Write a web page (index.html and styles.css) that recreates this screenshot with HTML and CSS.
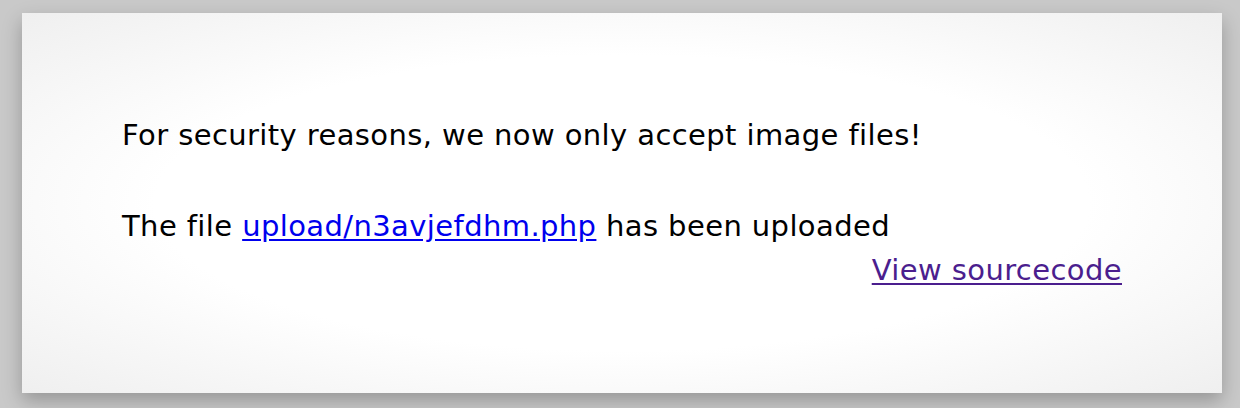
FILE: index.html
```html
<!DOCTYPE html>
<html>
<head>
<meta charset="utf-8">
<link rel="stylesheet" href="styles.css">
</head>
<body>
<div class="card">
  <p class="msg">For security reasons, we now only accept image files!</p>
  <p class="msg result">The file <a class="file" href="#">upload/n3avjefdhm.php</a> has been uploaded</p>
  <div class="source"><a class="src" href="#">View sourcecode</a></div>
</div>
</body>
</html>
```

FILE: styles.css
```css
html, body {
  margin: 0;
  padding: 0;
  background: #c9c9c9;
  width: 1240px;
  height: 408px;
  overflow: hidden;
}
.card {
  box-sizing: border-box;
  margin: 13px 0 0 22px;
  width: 1200px;
  height: 380px;
  padding: 100px 100px 0 100px;
  background: radial-gradient(ellipse at center, #ffffff 55%, #efefef 100%);
  box-shadow: 0 8px 18px rgba(0,0,0,0.25);
  font-family: "DejaVu Sans", sans-serif;
  font-size: 29px;
  letter-spacing: 0.4px;
  color: #000;
}
.msg {
  margin: 0;
  line-height: 44px;
}
.result {
  margin-top: 47px;
}
.file {
  color: #0000ee;
  text-underline-offset: 3px;
}
.source {
  text-align: right;
  line-height: 44px;
}
.src {
  color: #4b1e8e;
  text-underline-offset: 3px;
}
```
